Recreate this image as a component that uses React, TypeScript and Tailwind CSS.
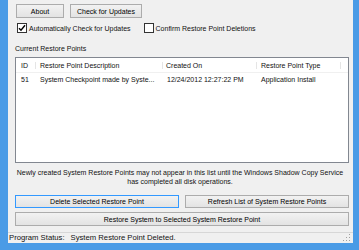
import React from 'react';

const font = { fontFamily: '"Liberation Sans", Arial, sans-serif' };

function Btn({ label, className = '' }: { label: string; className?: string }) {
  return (
    <div
      className={`flex items-center justify-center border border-[#acacac] bg-gradient-to-b from-[#f2f2f2] to-[#e3e3e3] text-[7px] leading-none text-black ${className}`}
    >
      {label}
    </div>
  );
}

function Check({ checked }: { checked?: boolean }) {
  return (
    <div className="flex h-[10px] w-[10px] items-center justify-center border border-[#333333] bg-white">
      {checked && (
        <svg width="8" height="8" viewBox="0 0 8 8">
          <path d="M1 4.2 L3 6.3 L7 1.3" fill="none" stroke="#000" strokeWidth="1.4" />
        </svg>
      )}
    </div>
  );
}

export default function App() {
  return (
    <div className="h-[250px] w-[359px] bg-[#4a9be6] pb-[7px] pl-[8px] pr-[6px]" style={font}>
      <div className="flex h-full w-full flex-col bg-[#f0f0f0] text-[7px] leading-none text-[#111]">
        <div className="ml-[8px] mt-[4px] flex gap-[6px]">
          <Btn label="About" className="h-[14px] w-[48px]" />
          <Btn label="Check for Updates" className="h-[14px] w-[72px]" />
        </div>

        <div className="ml-[9px] mt-[5px] flex items-center">
          <Check checked />
          <span className="ml-[2px]">Automatically Check for Updates</span>
          <div className="ml-[13px]">
            <Check />
          </div>
          <span className="ml-[2px]">Confirm Restore Point Deletions</span>
        </div>

        <div className="ml-[7px] mt-[12px]">Current Restore Points</div>

        <div className="ml-[7px] mt-[5px] h-[106px] w-[334px] border border-[#828790] bg-white">
          <div className="flex h-[15px] items-center border-b border-[#f0f0f0]">
            <div className="w-[20px] border-r border-[#e5e5e5] pl-[5px]">ID</div>
            <div className="w-[127px] border-r border-[#e5e5e5] pl-[4px]">Restore Point Description</div>
            <div className="w-[94px] border-r border-[#e5e5e5] pl-[3px]">Created On</div>
            <div className="w-[84px] border-r border-[#e5e5e5] pl-[4px]">Restore Point Type</div>
          </div>
          <div className="flex h-[13px] items-center">
            <div className="w-[20px] pl-[5px]">51</div>
            <div className="w-[127px] pl-[4px]">System Checkpoint made by Syste...</div>
            <div className="w-[94px] pl-[4px]">12/24/2012 12:27:22 PM</div>
            <div className="w-[84px] pl-[4px]">Application Install</div>
          </div>
        </div>

        <div className="mt-[5px] w-[344px] text-center leading-[9px]">
          Newly created System Restore Points may not appear in this list until the Windows Shadow Copy Service
          <br />
          has completed all disk operations.
        </div>

        <div className="ml-[7px] mt-[9px] flex gap-[6px]">
          <Btn label="Delete Selected Restore Point" className="h-[13px] w-[164px] !border-[#3399ff]" />
          <Btn label="Refresh List of System Restore Points" className="h-[13px] w-[164px]" />
        </div>
        <div className="ml-[7px] mt-[4px]">
          <Btn label="Restore System to Selected System Restore Point" className="h-[14px] w-[334px]" />
        </div>

        <div className="mt-[6px] flex flex-1 items-center border-t border-[#d7d7d7] pl-[1px] pr-[2px] text-[7.7px]">
          <span>Program Status:</span>
          <span className="ml-[6px]">System Restore Point Deleted.</span>
          <svg className="mb-[1px] ml-auto self-end" width="8" height="8" viewBox="0 0 8 8">
            <rect x="6" y="0" width="1" height="1" fill="#a0a0a0" />
            <rect x="3" y="3" width="1" height="1" fill="#a0a0a0" />
            <rect x="6" y="3" width="1" height="1" fill="#a0a0a0" />
            <rect x="0" y="6" width="1" height="1" fill="#a0a0a0" />
            <rect x="3" y="6" width="1" height="1" fill="#a0a0a0" />
            <rect x="6" y="6" width="1" height="1" fill="#a0a0a0" />
          </svg>
        </div>
      </div>
    </div>
  );
}
